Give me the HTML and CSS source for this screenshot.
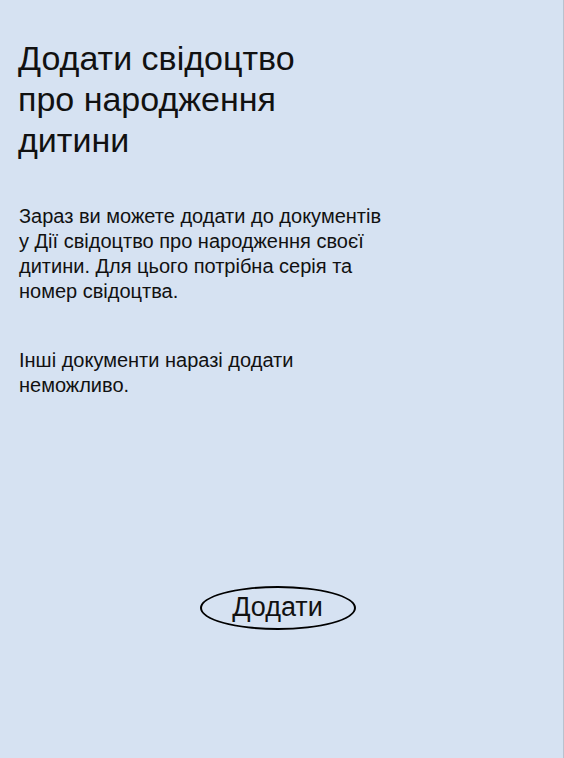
FILE: index.html
```html
<!DOCTYPE html>
<html lang="uk">
<head>
<meta charset="utf-8">
<link rel="stylesheet" href="styles.css">
</head>
<body>
<main class="screen">
  <h1 class="title">Додати свідоцтво<br>про народження<br>дитини</h1>
  <p class="text">Зараз ви можете додати до документів<br>у Дії свідоцтво про народження своєї<br>дитини. Для цього потрібна серія та<br>номер свідоцтва.</p>
  <p class="text text-second">Інші документи наразі додати<br>неможливо.</p>
  <div class="actions">
    <button class="btn">Додати</button>
  </div>
</main>
</body>
</html>
```
FILE: styles.css
```css
html, body {
  margin: 0;
  padding: 0;
}
body {
  width: 564px;
  height: 758px;
  background: #d6e2f2;
  font-family: "Liberation Sans", Arial, sans-serif;
  color: #111;
  overflow: hidden;
}
.screen {
  box-sizing: border-box;
  height: 758px;
  padding: 38px 18px 0 18px;
  border-right: 1px solid #b9c2cf;
  display: flex;
  flex-direction: column;
}
.title {
  margin: 0;
  font-weight: normal;
  font-size: 34px;
  line-height: 41px;
}
.text {
  margin: 43px 0 0 1px;
  font-size: 20px;
  line-height: 25px;
}
.text-second {
  margin-top: 44px;
}
.actions {
  display: flex;
  justify-content: center;
  margin-top: 188px;
  padding-right: 8px;
}
.btn {
  width: 156px;
  height: 44px;
  border: 2.5px solid #000;
  border-radius: 50%;
  background: transparent;
  font-family: "Liberation Sans", Arial, sans-serif;
  font-size: 27px;
  color: #111;
  padding: 0 0 2px;
}
```
